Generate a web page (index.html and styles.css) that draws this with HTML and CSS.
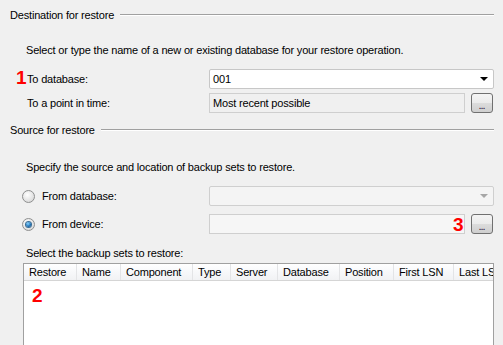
FILE: index.html
```html
<!DOCTYPE html>
<html lang="en">
<head>
  <meta charset="UTF-8">
  <title>Restore Database</title>
  <link rel="stylesheet" href="styles.css">
</head>
<body>
  <div class="page">

    <!-- Destination -->
    <div class="group-title"><span>Destination for restore</span><i></i></div>
    <p class="desc">Select or type the name of a new or existing database for your restore operation.</p>

    <div class="row first">
      <label>To database:</label>
      <div class="combo"><span>001</span><b class="arrow"></b></div>
      <em class="mark mark-1">1</em>
    </div>
    <div class="row">
      <label>To a point in time:</label>
      <div class="field">
        <div class="textbox readonly">Most recent possible</div>
        <button class="browse">...</button>
      </div>
    </div>

    <!-- Source -->
    <div class="group-title second"><span>Source for restore</span><i></i></div>
    <p class="desc second">Specify the source and location of backup sets to restore.</p>

    <div class="row first">
      <label class="radio"><span class="dot"></span>From database:</label>
      <div class="combo disabled"><span></span><b class="arrow"></b></div>
    </div>
    <div class="row wide">
      <label class="radio"><span class="dot checked"></span>From device:</label>
      <div class="field">
        <div class="textbox disabled"></div>
        <button class="browse">...</button>
      </div>
      <em class="mark mark-3">3</em>
    </div>

    <p class="list-label">Select the backup sets to restore:</p>
    <div class="list">
      <div class="list-head">
        <div style="width:53px">Restore</div>
        <div style="width:44px">Name</div>
        <div style="width:72px">Component</div>
        <div style="width:38px">Type</div>
        <div style="width:47px">Server</div>
        <div style="width:62px">Database</div>
        <div style="width:54px">Position</div>
        <div style="width:60px">First LSN</div>
        <div style="width:80px">Last LSN</div>
      </div>
      <em class="mark mark-2">2</em>
    </div>

  </div>
</body>
</html>
```

FILE: styles.css
```css
* { margin: 0; padding: 0; box-sizing: border-box; }

body {
  background: #f0f0f0;
  font-family: 'Liberation Sans', Arial, sans-serif;
  font-size: 11px;
  letter-spacing: -0.18px;
  color: #000;
  overflow: hidden;
}

.page {
  width: 503px;
  height: 345px;
  padding: 8px 9px 0 10px;
  overflow: hidden;
}

/* group headers with etched line */
.group-title {
  display: flex;
  align-items: center;
  height: 14px;
}

.group-title span { padding-right: 6px; }

.group-title i {
  flex: 1;
  height: 2px;
  border-top: 1px solid #a0a0a0;
  border-bottom: 1px solid #fff;
}

.group-title.second { margin-top: 10px; }

.desc {
  margin: 21px 0 0 16px;
  height: 14px;
  line-height: 14px;
}

.desc.second { margin-top: 23px; }

.row {
  display: flex;
  align-items: center;
  position: relative;
  height: 20px;
  margin-top: 4px;
}

.row.first { margin-top: 12px; }
.row.wide { margin-top: 8px; }

.row label {
  width: 199px;
  padding-left: 17px;
  display: flex;
  align-items: center;
}

.combo {
  width: 285px;
  height: 20px;
  background: #fff;
  border: 1px solid #c7c7c7;
  border-radius: 2px;
  display: flex;
  align-items: center;
  justify-content: space-between;
  padding: 0 5px 0 3px;
}

.combo.disabled { background: #f4f4f4; border-color: #cfcfcf; }

.arrow {
  width: 0;
  height: 0;
  border-left: 4px solid transparent;
  border-right: 4px solid transparent;
  border-top: 4px solid #000;
}

.combo.disabled .arrow { border-top-color: #a6a6a6; }

.field {
  display: flex;
  gap: 6px;
}

.textbox {
  width: 256px;
  height: 20px;
  line-height: 18px;
  border: 1px solid #cfcfcf;
  padding-left: 3px;
  background: #f6f6f6;
}

.textbox.readonly { background: #f0f0f0; }

.browse {
  width: 22px;
  height: 20px;
  border: 1px solid #707070;
  border-radius: 3px;
  background: linear-gradient(#f4f4f4 0%, #ebebeb 50%, #dcdcdc 51%, #cfcfcf 100%);
  font: 11px 'Liberation Sans', Arial, sans-serif;
  color: #2a1a3a;
  line-height: 22px;
  letter-spacing: -1px;
  padding-right: 1px;
}

/* radio buttons */
.dot {
  width: 13px;
  height: 13px;
  border-radius: 50%;
  border: 1px solid #8e8f8f;
  background: radial-gradient(circle at 40% 35%, #ffffff, #dedede 70%, #c8c8c8);
  margin: 0 7px 0 -5px;
  display: flex;
  align-items: center;
  justify-content: center;
}

.dot.checked::after {
  content: "";
  width: 5px;
  height: 5px;
  border-radius: 50%;
  background: radial-gradient(circle at 40% 35%, #8ad4ff, #1a6fb4 60%, #0a3b6e);
  box-shadow: 0 0 0 1px #3a6d95;
}

.list-label {
  margin: 12px 0 0 16px;
  height: 14px;
  line-height: 14px;
}

.list {
  position: relative;
  margin: 3px 0 0 13px;
  width: 471px;
  height: 90px;
  border: 1px solid #a0a0a0;
  background: #fff;
  overflow: hidden;
}

.list-head {
  display: flex;
  height: 17px;
  background: linear-gradient(#ffffff, #f7f8fa 50%, #f1f2f4);
  border-bottom: 1px solid #d5d5d5;
  white-space: nowrap;
}

.list-head div {
  flex: none;
  padding-left: 5px;
  line-height: 16px;
  border-right: 1px solid #e3e4e6;
  overflow: hidden;
}

/* red annotation numbers */
.mark {
  position: absolute;
  font: bold 19px 'Liberation Sans', Arial, sans-serif;
  color: #ff0000;
  font-style: normal;
  line-height: 1;
}

.mark-1 { left: 6px; top: -1px; }
.mark-3 { left: 443px; top: 1px; }
.mark-2 { left: 8px; top: 22px; }
```
